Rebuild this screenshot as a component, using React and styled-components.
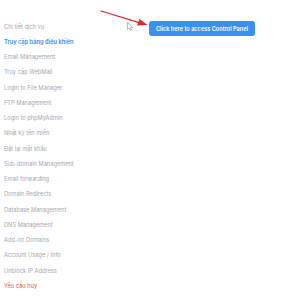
import React from "react";
import styled, { createGlobalStyle } from "styled-components";

const Global = createGlobalStyle`
  html, body { margin: 0; padding: 0; background: #fff; }
  body { font-family: Inter, "Noto Sans", sans-serif; }
`;

const Page = styled.div`
  position: relative;
  width: 284px;
  height: 300px;
  display: flex;
  overflow: hidden;
`;

const Sidebar = styled.ul`
  list-style: none;
  margin: 0;
  padding: 18.5px 0 0 4px;
  width: 145px;
  display: flex;
  flex-direction: column;
`;

const Item = styled.li`
  height: 15.25px;
  line-height: 15.25px;
  font-size: 5.7px;
  white-space: nowrap;
  color: ${(p) => (p.$tone === "active" ? "#3b8cf0" : p.$tone === "danger" ? "#ec4f4f" : "#a4a8b0")};
  font-weight: ${(p) => (p.$tone === "active" ? 600 : 400)};
`;

const Main = styled.div`
  flex: 1;
  padding-top: 21px;
`;

const Button = styled.button`
  width: 106px;
  height: 15px;
  border: none;
  border-radius: 3px;
  background: #3b8ef2;
  color: #fff;
  font-family: Inter, "Noto Sans", sans-serif;
  font-size: 5.6px;
  font-weight: 600;
  padding: 0;
  display: flex;
  align-items: center;
  justify-content: center;
`;

const Overlay = styled.svg`
  position: absolute;
  left: 0;
  top: 0;
  pointer-events: none;
`;

const items = [
  ["Chi tiết dịch vụ"],
  ["Truy cập bảng điều khiển", "active"],
  ["Email Management"],
  ["Truy cập WebMail"],
  ["Login to File Manager"],
  ["FTP Management"],
  ["Login to phpMyAdmin"],
  ["Nhật ký tên miền"],
  ["Đặt lại mật khẩu"],
  ["Sub-domain Management"],
  ["Email forwarding"],
  ["Domain Redirects"],
  ["Database Management"],
  ["DNS Management"],
  ["Add-on Domains"],
  ["Account Usage / Info"],
  ["Unblock IP Address"],
  ["Yêu cầu hủy", "danger"],
];

export default function App() {
  return (
    <Page>
      <Global />
      <Sidebar>
        {items.map(([t, tone]) => (
          <Item key={t} $tone={tone}>{t}</Item>
        ))}
      </Sidebar>
      <Main>
        <Button>Click here to access Control Panel</Button>
      </Main>
      <Overlay width="284" height="60" viewBox="0 0 284 60">
        <line x1="101" y1="11" x2="140" y2="22.8" stroke="#e3262a" strokeWidth="1.3" strokeLinecap="round" />
        <polygon points="147.5,25 137,25.5 139.5,19" fill="#e3262a" />
        <path d="M127.5 22.5 L127.5 29.5 L129.3 28 L130.6 30.6 L131.6 30.1 L130.4 27.6 L132.8 27.5 Z" fill="#fff" stroke="#8a8a8a" strokeWidth="0.6" strokeLinejoin="round" />
      </Overlay>
    </Page>
  );
}
